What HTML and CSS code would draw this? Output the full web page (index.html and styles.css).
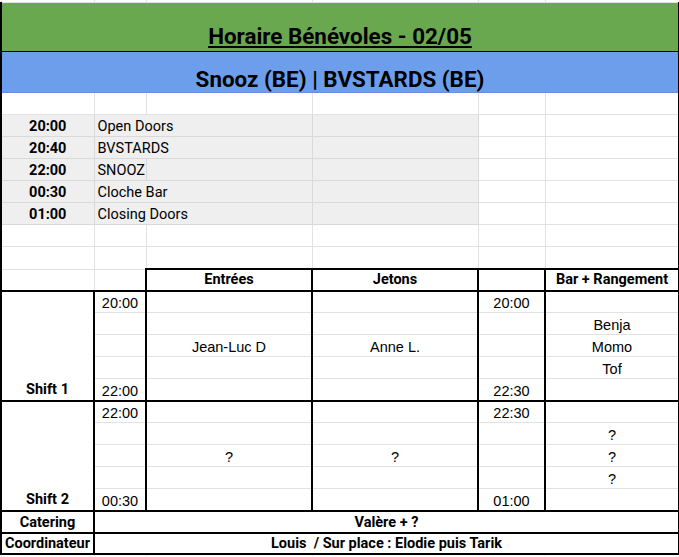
FILE: index.html
```html
<!DOCTYPE html>
<html lang="fr">
<head>
<meta charset="utf-8">
<title>Horaire Bénévoles - 02/05</title>
<link rel="stylesheet" href="styles.css">
</head>
<body>
<table class="sheet">
  <colgroup>
    <col class="c-a"><col class="c-b"><col class="c-c"><col class="c-d"><col class="c-e"><col class="c-f">
  </colgroup>
  <tbody>
    <tr class="stub"><td></td><td></td><td></td><td></td><td></td><td></td></tr>
    <tr class="r-title"><td colspan="6" class="title tk-t tk-l tk-r"><span class="u">Horaire Bénévoles - 02/05</span></td></tr>
    <tr class="r-sub"><td colspan="6" class="subtitle tk-l tk-r">Snooz (BE) | BVSTARDS (BE)</td></tr>
    <tr class="r"><td class="tk-l"></td><td></td><td></td><td></td><td></td><td class="tk-r"></td></tr>
    <tr class="r"><td class="tk-l g time">20:00</td><td colspan="2" class="g ev">Open Doors</td><td class="g"></td><td></td><td class="tk-r"></td></tr>
    <tr class="r"><td class="tk-l g time">20:40</td><td colspan="2" class="g ev">BVSTARDS</td><td class="g"></td><td></td><td class="tk-r"></td></tr>
    <tr class="r"><td class="tk-l g time">22:00</td><td class="g ev">SNOOZ</td><td class="g"></td><td class="g"></td><td></td><td class="tk-r"></td></tr>
    <tr class="r"><td class="tk-l g time">00:30</td><td colspan="2" class="g ev">Cloche Bar</td><td class="g"></td><td></td><td class="tk-r"></td></tr>
    <tr class="r"><td class="tk-l g time">01:00</td><td colspan="2" class="g ev">Closing Doors</td><td class="g"></td><td></td><td class="tk-r"></td></tr>
    <tr class="r"><td class="tk-l"></td><td></td><td></td><td></td><td></td><td class="tk-r"></td></tr>
    <tr class="r"><td class="tk-l"></td><td></td><td></td><td></td><td></td><td class="tk-r"></td></tr>
    <tr class="r r-hd"><td class="tk-l"></td><td></td><td class="hd tk-t tk-l tk-r">Entrées</td><td class="hd tk-t tk-l tk-r">Jetons</td><td class="hd tk-t tk-l tk-r"></td><td class="hd tk-t tk-l tk-r">Bar + Rangement</td></tr>

    <tr class="r s s-first"><td rowspan="5" class="shift tk-t tk-b">Shift 1</td><td class="tk-t cl">20:00</td><td class="tk-t"></td><td class="tk-t"></td><td class="tk-t cl">20:00</td><td class="tk-t"></td></tr>
    <tr class="r s"><td></td><td></td><td></td><td></td><td class="cl">Benja</td></tr>
    <tr class="r s"><td></td><td class="cl">Jean-Luc D</td><td class="cl">Anne L.</td><td></td><td class="cl">Momo</td></tr>
    <tr class="r s"><td></td><td></td><td></td><td></td><td class="cl">Tof</td></tr>
    <tr class="r s s-last"><td class="tk-b cl">22:00</td><td class="tk-b"></td><td class="tk-b"></td><td class="tk-b cl">22:30</td><td class="tk-b"></td></tr>

    <tr class="r s s-first"><td rowspan="5" class="shift tk-t tk-b">Shift 2</td><td class="tk-t cl">22:00</td><td class="tk-t"></td><td class="tk-t"></td><td class="tk-t cl">22:30</td><td class="tk-t"></td></tr>
    <tr class="r s"><td></td><td></td><td></td><td></td><td class="cl">?</td></tr>
    <tr class="r s"><td></td><td class="cl">?</td><td class="cl">?</td><td></td><td class="cl">?</td></tr>
    <tr class="r s"><td></td><td></td><td></td><td></td><td class="cl">?</td></tr>
    <tr class="r s s-last"><td class="tk-b cl">00:30</td><td class="tk-b"></td><td class="tk-b"></td><td class="tk-b cl">01:00</td><td class="tk-b"></td></tr>

    <tr class="r s r-cat"><td class="foot tk-t tk-b">Catering</td><td colspan="5" class="foot tk-t tk-b">Valère + ?</td></tr>
    <tr class="r s r-coord"><td class="foot tk-t tk-b">Coordinateur</td><td colspan="5" class="foot tk-t tk-b pre">Louis  / Sur place : Elodie puis Tarik</td></tr>
    <tr class="stub2"><td></td><td></td><td></td><td></td><td></td><td></td></tr>
  </tbody>
</table>
</body>
</html>
```
FILE: styles.css
```css
html, body {
  margin: 0;
  padding: 0;
  background: #ffffff;
}

body {
  font-family: Roboto, "Liberation Sans", Arial, sans-serif;
  color: #000000;
}

.sheet {
  border-collapse: collapse;
  table-layout: fixed;
  width: 678px;
  font-size: 14.5px;
}

.c-a { width: 93px; }
.c-b { width: 52px; }
.c-c { width: 166px; }
.c-d { width: 166px; }
.c-e { width: 67px; }
.c-f { width: 134px; }

.sheet td {
  border: 1px solid #e2e2e2;
  padding: 0 3px;
  overflow: hidden;
  white-space: nowrap;
  vertical-align: bottom;
  line-height: 17px;
}

.stub td {
  height: 2px;
  border-top: 0;
  padding: 0;
  line-height: 0;
  font-size: 0;
}

.stub2 td {
  height: 1px;
  border-bottom: 0;
  padding: 0;
  line-height: 0;
  font-size: 0;
}

.r td { height: 21px; }
.r-hd td { height: 20px; }
.s-first td { height: 20px; }
.s-last td { height: 21px; }
.r-cat td { height: 20px; }
.r-coord td { height: 19px; }

.tk-t { border-top: 2px solid #000 !important; }
.tk-b { border-bottom: 2px solid #000 !important; }
.tk-l { border-left: 2px solid #000 !important; }
.tk-r { border-right: 2px solid #000 !important; }

.s td {
  border-left: 2px solid #000;
  border-right: 2px solid #000;
}

.sheet .title {
  background: #6aa84f;
  height: 48px;
  text-align: center;
  font-weight: 700;
  font-size: 22.4px;
  line-height: 29px;
  border-bottom: 1px solid #000 !important;
  border-top-width: 1px !important;
}

.title .u {
  text-decoration: underline;
  text-decoration-thickness: 1.6px;
  text-underline-offset: 2px;
}

.sheet .subtitle {
  background: #6d9eeb;
  height: 40px;
  text-align: center;
  font-weight: 700;
  font-size: 22.4px;
  line-height: 26px;
  border-bottom: 1px solid #6391dc !important;
}

.sheet .g {
  background: #efefef;
  border-color: #d9d9d9;
}

.sheet .time {
  text-align: center;
  font-weight: 700;
  line-height: 19.5px;
}

.sheet .ev {
  line-height: 19.5px;
}

.sheet .hd {
  text-align: center;
  font-weight: 700;
  line-height: 20px;
}

.sheet .shift {
  text-align: center;
  font-weight: 700;
  line-height: 21px;
}

.sheet .cl {
  font-family: "Liberation Sans", Arial, sans-serif;
  text-align: center;
  line-height: 17px;
}

.sheet .foot {
  text-align: center;
  font-weight: 700;
  padding: 0 2px;
  line-height: 18px;
}

.r-coord .foot {
  line-height: 19px;
}

.sheet .pre {
  white-space: pre;
}
```
